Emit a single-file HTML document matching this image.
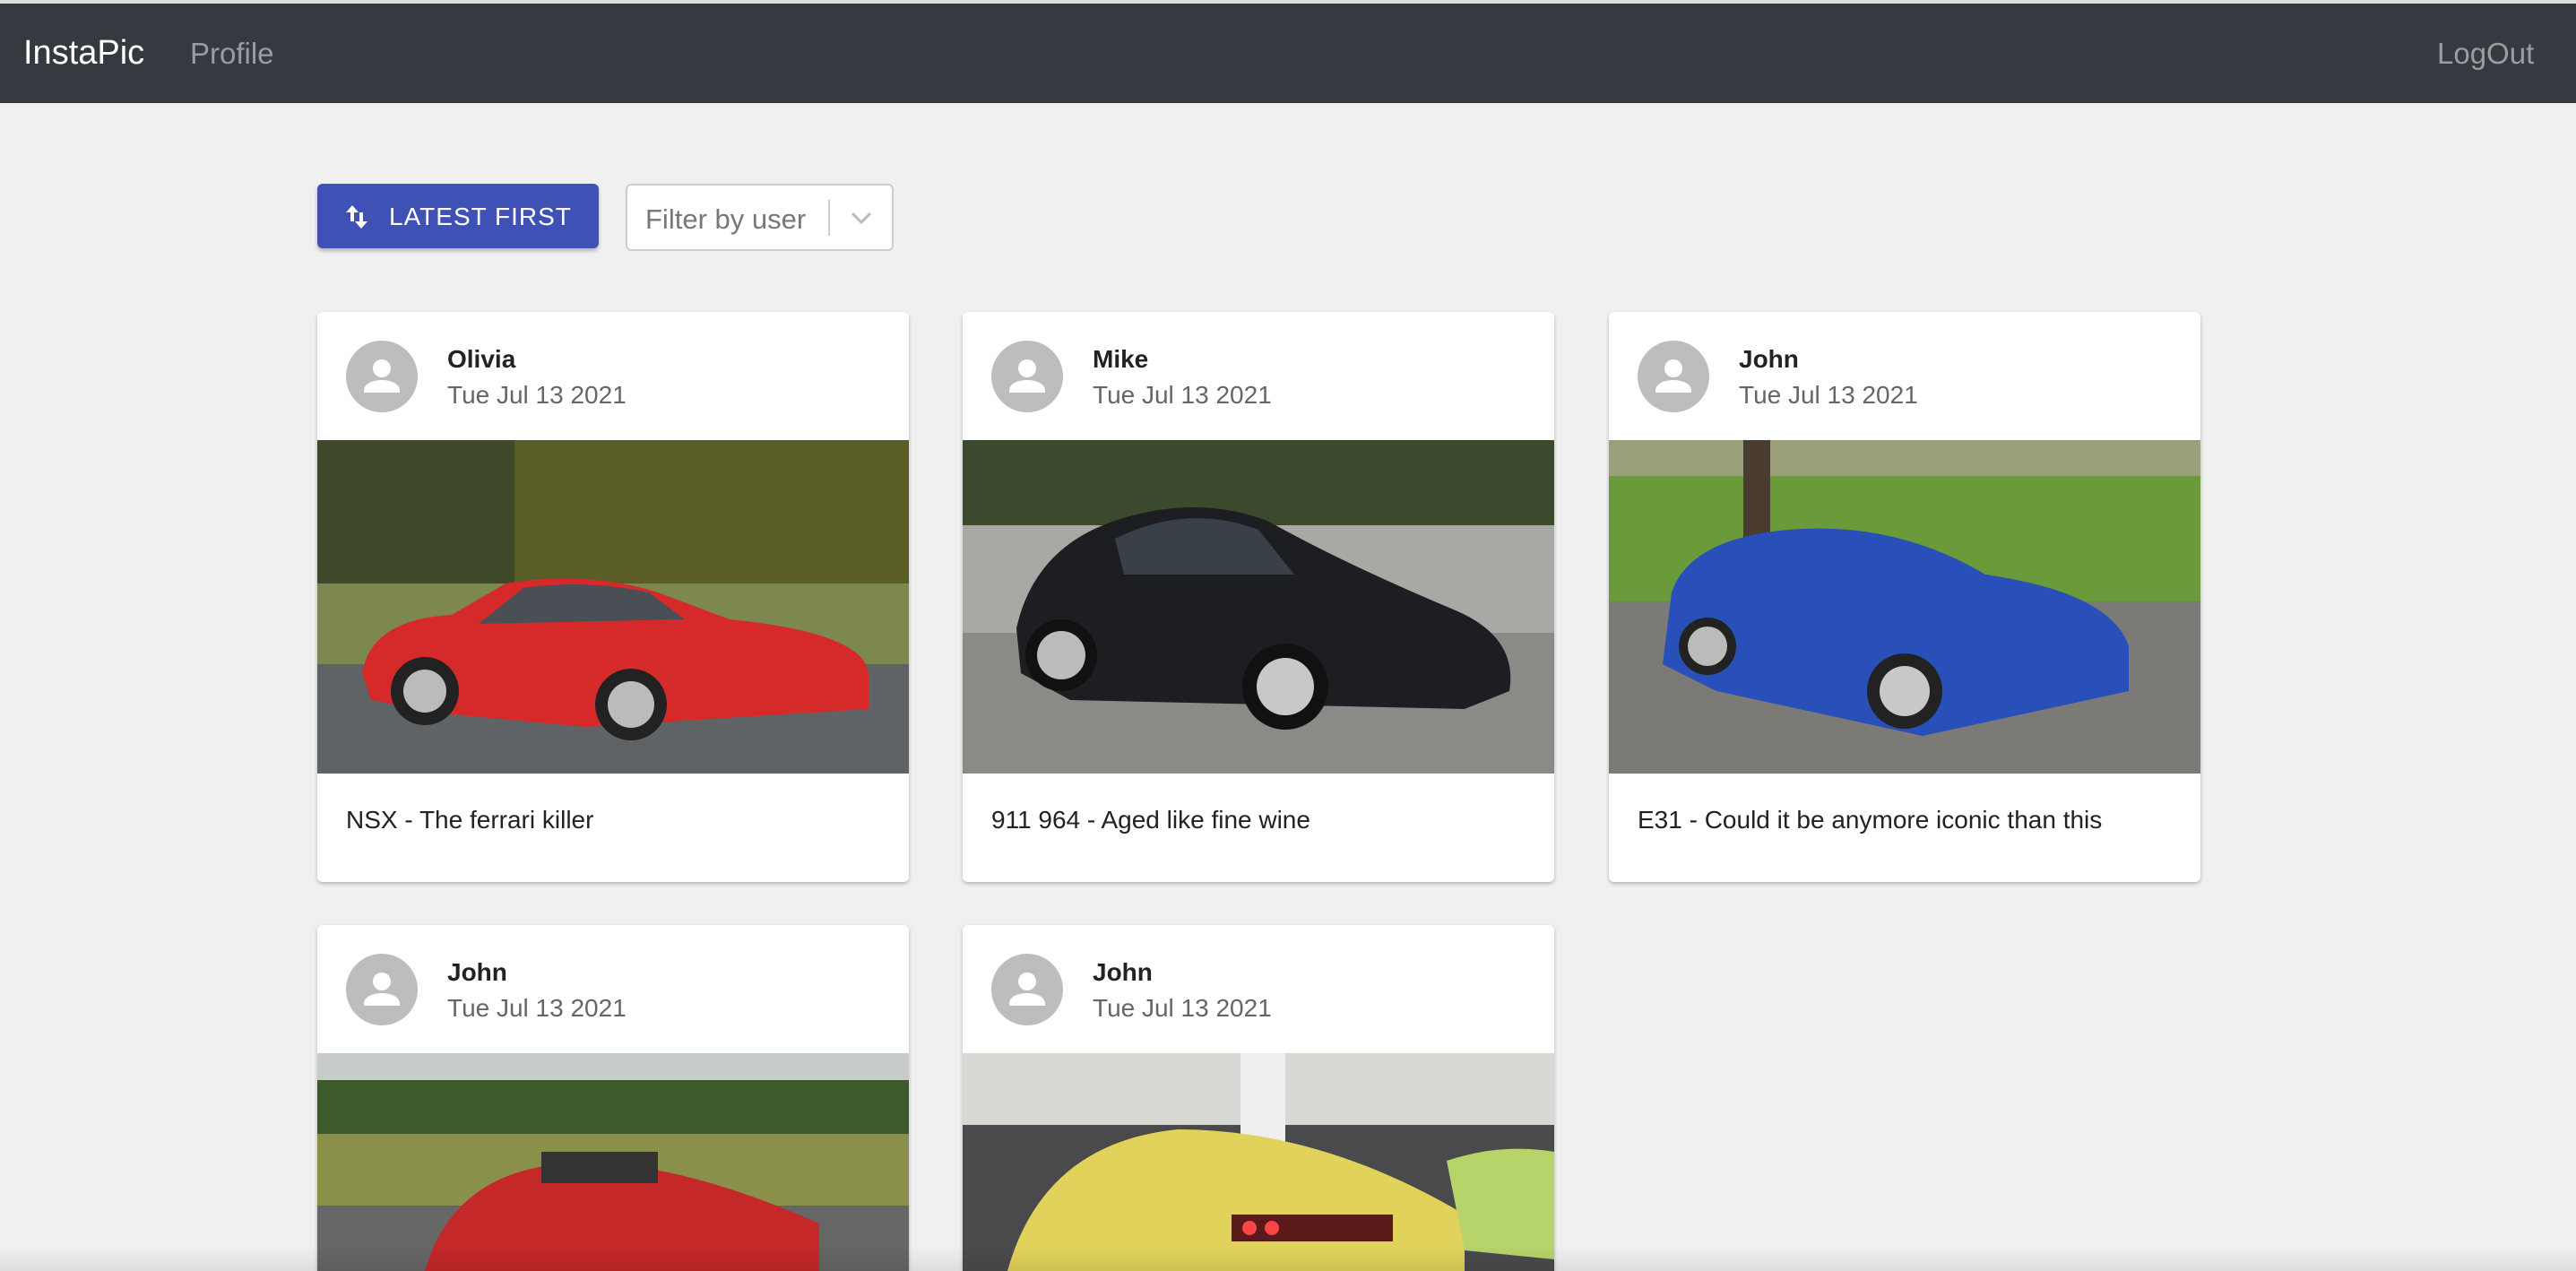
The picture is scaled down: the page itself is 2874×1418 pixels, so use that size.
<!DOCTYPE html>
<html><head><meta charset="utf-8"><style>
*{box-sizing:border-box;margin:0;padding:0}
html,body{width:2874px;height:1418px;overflow:hidden}
body{background:#f0f0f0;font-family:"Liberation Sans",Arial,sans-serif;position:relative}
.nav{position:absolute;left:0;top:0;width:2874px;height:115px;background:#343a40;border-top:4px solid #ddd}
.nav span{position:absolute;top:37px;font-size:33px;color:#9a9da0}
.btn{position:absolute;left:354px;top:205px;width:314px;height:72px;background:#3f51b5;border-radius:6px;box-shadow:0 3px 4px rgba(0,0,0,.25);color:#fff;font-size:28px;letter-spacing:1px}
.sel{position:absolute;left:698px;top:205px;width:299px;height:75px;background:#fff;border:2px solid #ccc;border-radius:6px;color:#777;font-size:31px}
.card{position:absolute;width:660px;background:#fff;border-radius:6px;box-shadow:0 2px 4px rgba(0,0,0,.25);overflow:hidden}
.av{position:absolute;left:32px;top:32px;width:80px;height:80px;border-radius:50%;background:#bdbdbd}
.nm{position:absolute;left:145px;top:37px;font-size:28px;font-weight:bold;color:#222}
.dt{position:absolute;left:145px;top:77px;font-size:28px;color:#666}
.img{position:absolute;left:0;top:143px;width:660px;height:372px}
.cap{position:absolute;left:32px;top:551px;font-size:28px;color:#222}
</style></head><body>
<div class="nav"><span style="left:26px;color:#fff;font-size:38px;top:34px">InstaPic</span><span style="left:212px">Profile</span><span style="left:2719px">LogOut</span></div>
<div class="btn"><svg style="position:absolute;left:30px;top:22px" width="28" height="30" viewBox="0 0 28 30"><path d="M9 2L2 10h5v10h4V10h5z M19 28l7-8h-5V10h-4v10h-5z" fill="#fff"/></svg><span style="position:absolute;left:80px;top:21px">LATEST FIRST</span></div>
<div class="sel"><span style="position:absolute;left:20px;top:20px">Filter by user</span><div style="position:absolute;left:224px;top:16px;width:2px;height:40px;background:#ccc"></div><svg style="position:absolute;left:248px;top:28px" width="26" height="16" viewBox="0 0 26 16"><path d="M3 3l10 10 10-10" stroke="#bbb" stroke-width="3" fill="none"/></svg></div>

<div class="card" style="left:354px;top:348px;height:636px"><div class="av"><svg width="80" height="80" viewBox="0 0 80 80"><circle cx="40" cy="31" r="10" fill="#fff"/><path d="M20 56c0-9 12-12 20-12s20 3 20 12v2H20z" fill="#fff"/></svg></div><div class="nm">Olivia</div><div class="dt">Tue Jul 13 2021</div>
<svg class="img" viewBox="0 0 660 372" preserveAspectRatio="none"><rect width="660" height="372" fill="#4f5a5c"/><rect width="660" height="170" fill="#3e4a2a"/><rect x="220" width="440" height="170" fill="#5a5d25"/><rect y="160" width="660" height="100" fill="#7d8750"/><rect y="250" width="660" height="122" fill="#5f6366"/><path d="M50 260 Q60 200 150 195 L210 160 Q300 145 380 170 L460 200 Q610 215 615 260 L615 300 L300 320 L140 305 L60 290Z" fill="#d62a2a"/><path d="M180 205 L230 165 Q300 155 370 170 L410 200 Z" fill="#4a4f55"/><circle cx="120" cy="280" r="38" fill="#222"/><circle cx="120" cy="280" r="24" fill="#bbb"/><circle cx="350" cy="295" r="40" fill="#222"/><circle cx="350" cy="295" r="26" fill="#bbb"/></svg>
<div class="cap">NSX - The ferrari killer</div></div>

<div class="card" style="left:1074px;top:348px;height:636px"><div class="av"><svg width="80" height="80" viewBox="0 0 80 80"><circle cx="40" cy="31" r="10" fill="#fff"/><path d="M20 56c0-9 12-12 20-12s20 3 20 12v2H20z" fill="#fff"/></svg></div><div class="nm">Mike</div><div class="dt">Tue Jul 13 2021</div>
<svg class="img" viewBox="0 0 660 372" preserveAspectRatio="none"><rect width="660" height="372" fill="#8e8e8c"/><rect width="660" height="100" fill="#3b4a2c"/><rect y="95" width="660" height="120" fill="#a9a8a4"/><rect y="215" width="660" height="157" fill="#8c8a86"/><path d="M60 210 Q80 120 170 90 Q260 60 340 90 Q430 140 550 190 Q620 220 610 280 L560 300 L120 290 L65 260Z" fill="#1c1e22"/><path d="M170 110 Q250 70 330 100 L370 150 L180 150Z" fill="#3a4048"/><circle cx="110" cy="240" r="40" fill="#111"/><circle cx="110" cy="240" r="27" fill="#bbb"/><circle cx="360" cy="275" r="48" fill="#111"/><circle cx="360" cy="275" r="32" fill="#c8c8c8"/></svg>
<div class="cap">911 964 - Aged like fine wine</div></div>

<div class="card" style="left:1795px;top:348px;height:636px"><div class="av"><svg width="80" height="80" viewBox="0 0 80 80"><circle cx="40" cy="31" r="10" fill="#fff"/><path d="M20 56c0-9 12-12 20-12s20 3 20 12v2H20z" fill="#fff"/></svg></div><div class="nm">John</div><div class="dt">Tue Jul 13 2021</div>
<svg class="img" viewBox="0 0 660 372" preserveAspectRatio="none"><rect width="660" height="372" fill="#6f6e6a"/><rect width="660" height="60" fill="#9aa07a"/><rect y="40" width="660" height="140" fill="#6a9a3a"/><rect y="180" width="660" height="192" fill="#7b7a77"/><rect x="150" width="30" height="130" fill="#4a3c30"/><path d="M70 170 Q90 110 200 100 Q320 90 420 150 Q560 170 580 230 L580 280 L350 330 L120 280 L60 250Z" fill="#2850b8"/><circle cx="110" cy="230" r="32" fill="#222"/><circle cx="110" cy="230" r="22" fill="#bbb"/><circle cx="330" cy="280" r="42" fill="#222"/><circle cx="330" cy="280" r="28" fill="#c8c8c8"/></svg>
<div class="cap">E31 - Could it be anymore iconic than this</div></div>

<div class="card" style="left:354px;top:1032px;height:386px;border-radius:6px 6px 0 0"><div class="av"><svg width="80" height="80" viewBox="0 0 80 80"><circle cx="40" cy="31" r="10" fill="#fff"/><path d="M20 56c0-9 12-12 20-12s20 3 20 12v2H20z" fill="#fff"/></svg></div><div class="nm">John</div><div class="dt">Tue Jul 13 2021</div>
<svg class="img" style="height:243px" viewBox="0 0 660 243" preserveAspectRatio="none"><rect width="660" height="243" fill="#8a8f4a"/><rect width="660" height="40" fill="#c7ccc8"/><rect y="30" width="660" height="60" fill="#3c5a2c"/><rect y="170" width="660" height="73" fill="#666"/><path d="M120 243 Q150 140 260 125 Q380 110 560 190 L560 243Z" fill="#c42828"/><rect x="250" y="110" width="130" height="35" fill="#333"/></svg></div>

<div class="card" style="left:1074px;top:1032px;height:386px;border-radius:6px 6px 0 0"><div class="av"><svg width="80" height="80" viewBox="0 0 80 80"><circle cx="40" cy="31" r="10" fill="#fff"/><path d="M20 56c0-9 12-12 20-12s20 3 20 12v2H20z" fill="#fff"/></svg></div><div class="nm">John</div><div class="dt">Tue Jul 13 2021</div>
<svg class="img" style="height:243px" viewBox="0 0 660 243" preserveAspectRatio="none"><rect width="660" height="243" fill="#4a4a4c"/><rect width="660" height="80" fill="#d8d8d4"/><rect x="310" width="50" height="100" fill="#eee"/><path d="M50 243 Q90 100 240 85 Q400 85 560 180 L560 243Z" fill="#e0d25a"/><path d="M540 120 Q600 100 660 110 L660 230 L560 220Z" fill="#b6d46a"/><rect x="300" y="180" width="180" height="30" fill="#5a1a1a"/><circle cx="320" cy="195" r="8" fill="#f44"/><circle cx="345" cy="195" r="8" fill="#f44"/></svg></div>
<div style="position:absolute;left:0;top:1390px;width:2874px;height:28px;background:linear-gradient(rgba(0,0,0,0),rgba(0,0,0,.08))"></div>
</body></html>
